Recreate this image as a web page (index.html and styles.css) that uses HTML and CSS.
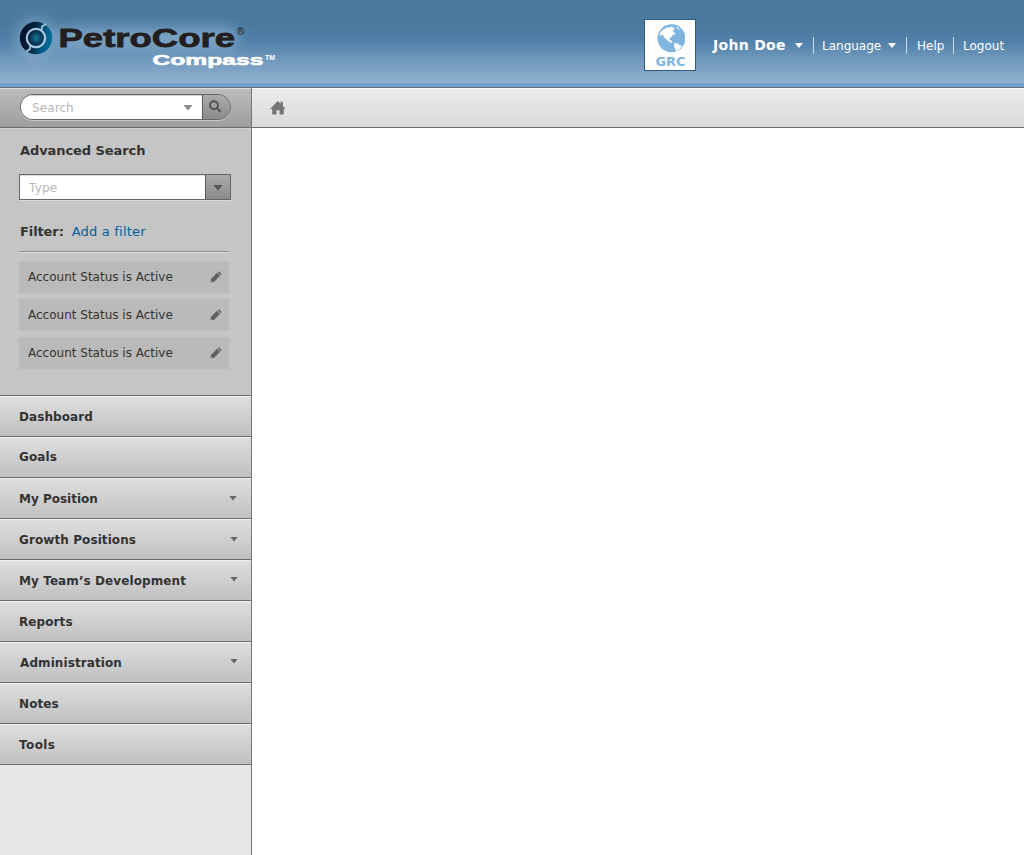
FILE: index.html
```html
<!DOCTYPE html>
<html lang="en">
<head>
<meta charset="utf-8">
<title>PetroCore Compass</title>
<link rel="stylesheet" href="styles.css">
</head>
<body>
<header class="header">
  <svg class="logo" width="290" height="83" viewBox="0 0 290 83" role="img">
    <defs>
      <linearGradient id="ring" x1="0" y1="0.4" x2="1" y2="0.6">
        <stop offset="0" stop-color="#00102c"/><stop offset="0.4" stop-color="#04233f"/><stop offset="0.75" stop-color="#005b87"/><stop offset="1" stop-color="#00739c"/>
      </linearGradient>
      <radialGradient id="core"><stop offset="0" stop-color="#177895"/><stop offset="1" stop-color="#04304f"/></radialGradient>
      <filter id="glow" x="-20%" y="-60%" width="140%" height="220%"><feGaussianBlur stdDeviation="7"/></filter>
    </defs>
    <g filter="url(#glow)" fill="#a9c8e2" opacity=".5">
      <circle cx="36" cy="38" r="19"/>
      <rect x="57" y="27" width="180" height="22" rx="8"/>
    </g>
    <circle cx="36" cy="38" r="16.2" fill="url(#ring)"/>
    <circle cx="36" cy="38" r="9.2" fill="none" stroke="#a9c6dc" stroke-width="2.2"/>
    <path d="M41.500 31 42 26.500 46 24M30.500 45 30 49 26.500 51.500" fill="none" stroke="#a9c6dc" stroke-width="1.800"/>
    <circle cx="36.2" cy="38" r="6.9" fill="url(#core)"/>
    <text class="logo-name" x="58.500" y="47.300" textLength="176.500" lengthAdjust="spacingAndGlyphs">PetroCore</text>
    <text class="logo-reg" x="236.500" y="35">®</text>
    <text class="logo-sub" x="152.500" y="65" textLength="111" lengthAdjust="spacingAndGlyphs">Compass</text>
    <text class="logo-tm" x="265" y="59.500" textLength="10" lengthAdjust="spacingAndGlyphs">TM</text>
  </svg>
  <div class="account">
    <div class="badge">
      <svg width="30" height="30" viewBox="0 0 30 30">
        <circle cx="16.500" cy="14.300" r="14" fill="#80b5df"/>
        <path d="M5.200 8.500 8.300 5.500 10.500 4.500 12.300 3 14.500 3.700 17 2.300 18 3.500 19.500 4 19.300 5.700 17.700 6.500 18.500 8 20.500 9.700 18.500 11 17 11.500 16.500 13 14.800 14 14.300 16.500 16.500 16 16.500 18 18 19 16.500 19 13.500 17.500 11 15 9 13.500 8.300 11.500 7.300 10.500 4.800 12Z" fill="#fff"/>
        <path d="M19.500 19.300 21 18.800 23 19.700 24.500 21 27 22 25.500 24 23.500 26 20.500 27.500 20.500 25 18.800 22.500Z" fill="#fff"/>
        <path d="M22 2.500 24.500 4.500 25 6 23 5.500 21 3.500Z" fill="#fff" opacity=".6"/>
      </svg>
      <span class="badge-text">GRC</span>
    </div>
    <span class="user">John Doe</span>
    <span class="caret caret-user"></span>
    <span class="language">Language</span>
    <span class="caret caret-language"></span>
    <span class="help">Help</span>
    <span class="logout">Logout</span>
  </div>
</header>
<div class="body">
  <aside class="sidebar">
    <div class="search-bar">
      <div class="search">
        <div class="search-input"><span>Search</span><i class="arrow arrow-search"></i></div>
        <div class="search-button">
          <svg width="14" height="14" viewBox="0 0 14 14" fill="none" stroke="#505050"><circle cx="5" cy="5.300" r="4" stroke-width="1.900"/><path d="M8 8.300 11.500 11.800" stroke-width="2"/></svg>
        </div>
      </div>
    </div>
    <section class="advanced">
      <h2 class="title">Advanced Search</h2>
      <div class="select"><div class="select-value">Type</div><div class="select-button"><i class="arrow arrow-select"></i></div></div>
      <div class="filter-head"><b>Filter:</b><a class="add">Add a filter</a></div>
      <ul class="filters">
        <li class="filter"><span>Account Status is Active</span><svg width="12" height="12" viewBox="0 0 12 12"><path d="M.5 11.300.900 8 7 1.800 10 4.800 3.900 10.900ZM7.700 1.300 9 .300 11.700 2.900 10.700 4.200Z" fill="#606060"/><path d="M1.300 10 2.100 10.700" stroke="#ccc"/></svg></li>
        <li class="filter"><span>Account Status is Active</span><svg width="12" height="12" viewBox="0 0 12 12"><path d="M.5 11.300.900 8 7 1.800 10 4.800 3.900 10.900ZM7.700 1.300 9 .300 11.700 2.900 10.700 4.200Z" fill="#606060"/><path d="M1.300 10 2.100 10.700" stroke="#ccc"/></svg></li>
        <li class="filter"><span>Account Status is Active</span><svg width="12" height="12" viewBox="0 0 12 12"><path d="M.5 11.300.900 8 7 1.800 10 4.800 3.900 10.900ZM7.700 1.300 9 .300 11.700 2.900 10.700 4.200Z" fill="#606060"/><path d="M1.300 10 2.100 10.700" stroke="#ccc"/></svg></li>
      </ul>
    </section>
    <nav class="menu">
      <a class="item">Dashboard</a>
      <a class="item item-goals">Goals</a>
      <a class="item item-position">My Position<i class="arrow arrow-menu"></i></a>
      <a class="item">Growth Positions<i class="arrow arrow-menu"></i></a>
      <a class="item">My Team’s Development<i class="arrow arrow-menu arrow-raised"></i></a>
      <a class="item">Reports</a>
      <a class="item item-admin">Administration<i class="arrow arrow-menu arrow-raised"></i></a>
      <a class="item">Notes</a>
      <a class="item item-tools">Tools</a>
    </nav>
  </aside>
  <main class="main">
    <div class="crumbs">
      <svg width="16" height="14" viewBox="0 0 16 14"><path d="M7.800 0 10.600 2.800V.8H12.900V4.900L15.600 8H13.800V13.500H9.600V9.300H6.500V13.500H2.200V8H0Z" fill="#757575"/></svg>
    </div>
  </main>
</div>
</body>
</html>
```
FILE: styles.css
```css
* { box-sizing: border-box; }
body {
  margin: 0;
  height: 855px;
  display: flex;
  flex-direction: column;
  overflow: hidden;
  background: #fff;
  color: #333;
  font: 12px/16px "DejaVu Sans", Verdana, sans-serif;
}
svg { display: block; flex: none; }

.header {
  flex: none;
  height: 88px;
  display: flex;
  justify-content: space-between;
  background: linear-gradient(#49799f 0, #49799f 24px, #5181a9 42px, #6c95ba 57px, #8fb0cf 82px, #8fb0cf 83px, #70a0ca 83px);
  border-bottom: 1px solid #6b6f75;
}
.logo-name { font: bold 26px "Liberation Sans", Arial, sans-serif; fill: #231f20; stroke: #231f20; stroke-width: .8px; }
.logo-reg { font: 11px "Liberation Sans", Arial, sans-serif; fill: #231f20; }
.logo-sub { font: bold 15.5px "Liberation Sans", Arial, sans-serif; fill: #fff; stroke: #fff; stroke-width: .6px; }
.logo-tm { font: bold 7px "Liberation Sans", Arial, sans-serif; fill: #fff; }

.account { display: flex; padding: 19px 20px 0 0; height: 72px; color: #fff; line-height: 52px; }
.badge {
  width: 52px;
  height: 52px;
  padding-top: 4px;
  display: flex;
  flex-direction: column;
  align-items: center;
  background: #fff;
  border: 1px solid #315a7d;
  margin-right: 17px;
}
.badge-text { color: #80b5df; font-size: 13px; font-weight: bold; line-height: 16px; margin-left: 1px; }
.user { font-size: 14px; font-weight: bold; width: 82px; letter-spacing: .3px; white-space: nowrap; }
.caret { width: 8px; height: 5px; margin-top: 24px; background: #fff; clip-path: polygon(0 0, 100% 0, 50% 100%); }
.caret-user { margin-right: 10px; }
.language { position: relative; width: 75px; padding: 1px 0 0 9px; }
.language::before, .help::before, .logout::before { content: ""; position: absolute; left: 0; top: 18px; width: 1px; height: 17px; background: #c8dced; }
.caret-language { margin-right: 10px; }
.help, .logout { position: relative; padding: 1px 0 0 11px; width: 47px; }
.logout { padding-left: 10px; width: 51px; }

.body { flex: 1; display: flex; min-height: 0; }
.sidebar { width: 252px; background: #e7e7e7; border-right: 1px solid #777; }
.search-bar {
  height: 40px;
  padding: 6px 20px 0;
  background: linear-gradient(#bcbcbc, #9e9e9e);
  border-bottom: 1px solid #6c6c6c;
  box-shadow: inset 0 1px #dedede;
}
.search { display: flex; width: 211px; height: 26px; border: 1px solid #666; border-radius: 13px; overflow: hidden; box-shadow: 0 1px #c8c8c8; }
.search-input { width: 181px; display: flex; align-items: center; justify-content: space-between; padding: 1px 9px 0 11px; background: #fff; color: #b8b8b8; box-shadow: inset 0 1px 1px #ccc; letter-spacing: .1px; }
.search-button { flex: 1; padding: 5px 0 0 6px; background: linear-gradient(#aaa, #8b8b8b); border-left: 1px solid #5c5c5c; }
.arrow { display: block; background: #666; clip-path: polygon(0 0, 100% 0, 50% 100%); }
.arrow-search { width: 10px; height: 6px; background: #8c8c8c; }
.arrow-select { width: 10px; height: 6px; margin-top: 1px; background: #555; }
.advanced { height: 267px; padding: 15px 20px 0 19px; background: #c5c5c5; box-shadow: inset 0 1px #d4d4d4; }
.title { margin: 0 0 15px 1px; font-size: 13px; line-height: 16px; letter-spacing: -.08px; }
.select { display: flex; width: 212px; height: 26px; border: 1px solid #666; box-shadow: 0 1px #d9d9d9; }
.select-value { width: 185px; padding-left: 9px; line-height: 27px; background: #fff; color: #b8b8b8; box-shadow: inset 0 1px 1px #ddd; letter-spacing: .2px; }
.select-button { flex: 1; display: flex; align-items: center; justify-content: center; background: linear-gradient(#aaa, #8a8a8a); border-left: 1px solid #5c5c5c; }
.filter-head { display: flex; width: 210px; height: 52px; padding: 24px 0 0 1px; font-size: 13px; border-bottom: 1px solid #888; box-shadow: 0 1px #e0e0e0; }
.filter-head b { letter-spacing: -.1px; }
.add { color: #00609c; margin-left: 8px; letter-spacing: .2px; }
.filters { list-style: none; margin: 9px 0 0; padding: 0; display: grid; gap: 6px; width: 210px; }
.filter { height: 32px; display: flex; align-items: center; justify-content: space-between; padding: 0 7px 0 9px; background: #bababa; }
.item {
  display: flex;
  align-items: center;
  justify-content: space-between;
  height: 41px;
  padding: 1px 13px 0 19px;
  background: linear-gradient(#dfdfdf, #c0c0c0);
  border-top: 1px solid #6c6c6c;
  box-shadow: inset 0 1px #f0f0f0;
  font-weight: bold;
  letter-spacing: .09px;
}
.item-tools { height: 42px; border-bottom: 1px solid #6c6c6c; letter-spacing: .4px; }
.item-goals { padding-bottom: 1px; }
.item-position { padding-right: 14px; letter-spacing: 0; }
.item-admin { padding-left: 20px; }
.arrow-menu { width: 8px; height: 5px; margin-bottom: 1px; }
.arrow-raised { margin-bottom: 3px; }
.main { flex: 1; }
.crumbs { height: 40px; padding: 13px 18px; background: linear-gradient(#ebebeb, #dadada); border-bottom: 1px solid #6c6c6c; box-shadow: inset 0 1px #fafafa; }
```
